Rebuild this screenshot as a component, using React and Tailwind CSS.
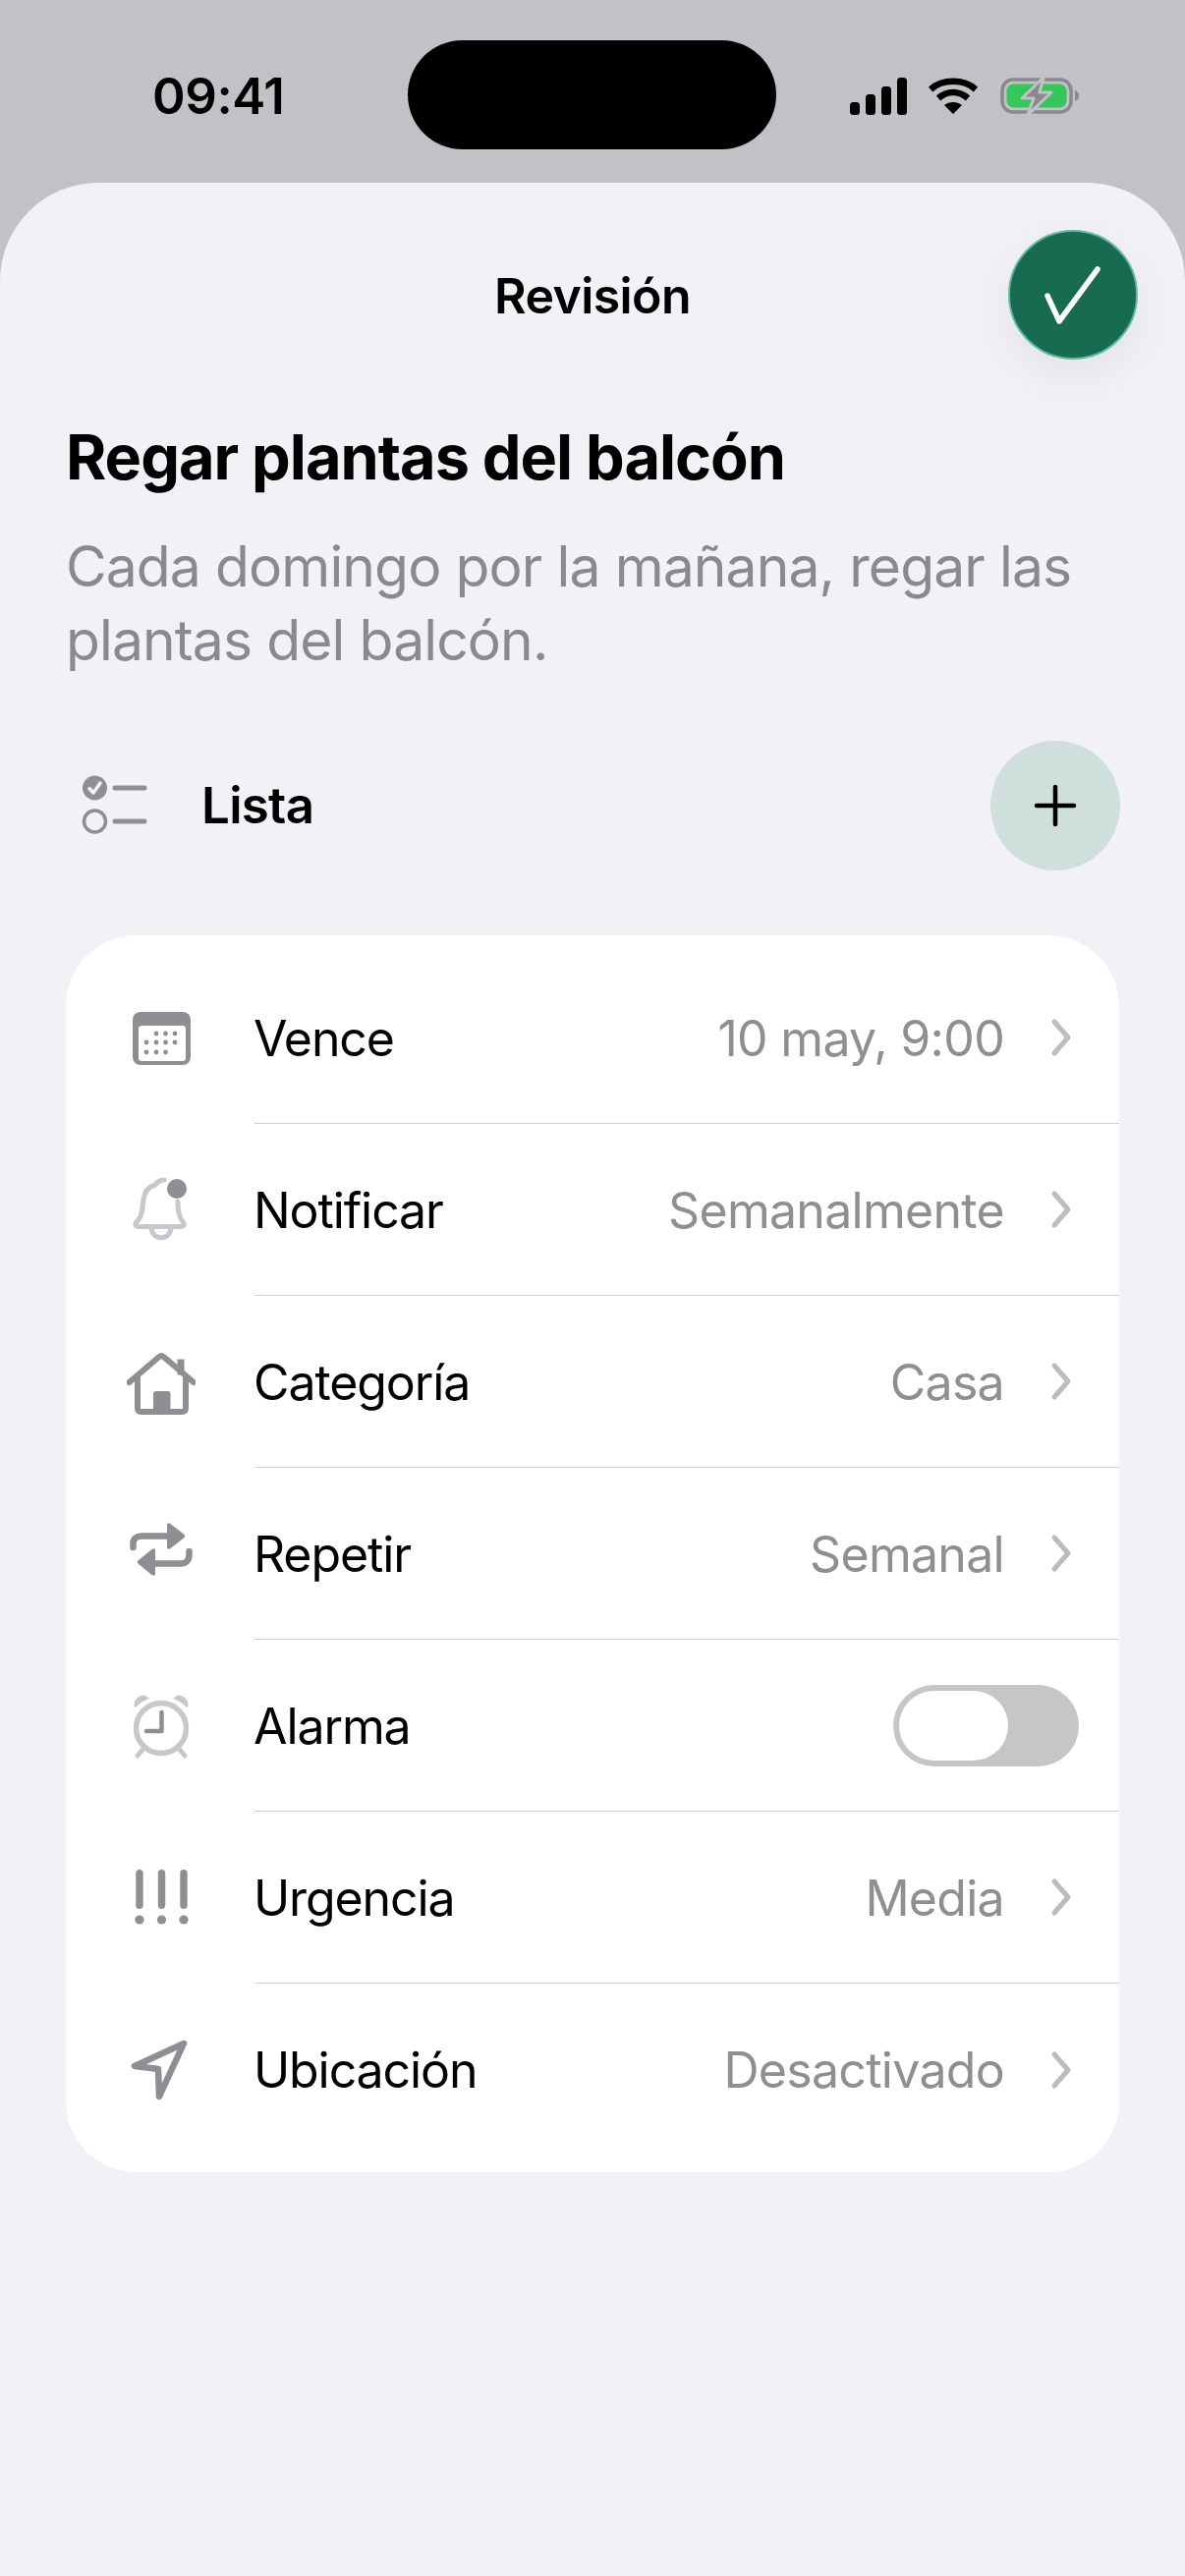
const font = { fontFamily: "Inter, 'Noto Sans', sans-serif" };

const CalendarIcon = () => (
  <svg viewBox="0 0 70 70" className="w-[70px] h-[70px]" fill="#8e8e93">
    <rect x="6" y="8" width="59" height="54" rx="8" />
    <rect x="12" y="22" width="48" height="36" rx="3" fill="#fff" />
    {[[30, 30], [39.5, 30], [49, 30], [20, 39], [30, 39], [39.5, 39], [49, 39], [20, 49], [30, 49], [39.5, 49]].map(([cx, cy]) => (
      <circle key={cx + "-" + cy} cx={cx} cy={cy} r="2.4" />
    ))}
  </svg>
);

const BellIcon = () => (
  <svg viewBox="0 0 70 70" className="w-[70px] h-[70px]" fill="none">
    <path d="M38 4 C34 4 30 7 29 9 C22 11 18 16 17 24 C16 33 16 38 13 43 C11 46 9 47 9 49 C9 51 10 51.500 12 51.500 L55 51.500 C58 51.500 59 50 58 48 C54 43 52 38 52 26" stroke="#c7c7cc" strokeWidth="5" strokeLinecap="round" />
    <path d="M25 53 C26 66 44 66 45 53" stroke="#c7c7cc" strokeWidth="5" />
    <circle cx="51" cy="13" r="10" fill="#8e8e93" />
  </svg>
);

const HouseIcon = () => (
  <svg viewBox="0 0 70 70" className="w-[70px] h-[70px]" fill="none" stroke="#8e8e93" strokeWidth="6" strokeLinecap="round" strokeLinejoin="round">
    <path d="M2.500 35 L33 9 C34.500 7.800 36 7.800 37.500 9 L68 35" />
    <path d="M11 30 V61 C11 64 12 65 15 65 H56 C59 65 60 64 60 61 V30" />
    <path d="M55 15 V24" strokeWidth="7" strokeLinecap="square" />
    <path d="M27 65 V47 C27 45 28 44 30 44 H42 C44 44 44.500 45 44.500 47 V65 Z" fill="#8e8e93" stroke="none" />
  </svg>
);

const RepeatIcon = () => (
  <svg viewBox="0 0 70 70" className="w-[70px] h-[70px]" fill="none">
    <path d="M6.500 28 V24 C6.500 19 10 16.500 15 16.500 H44" stroke="#8e8e93" strokeWidth="6.500" strokeLinecap="round" />
    <path d="M41 5 C41 3 43 3 44.500 4 L58 14.500 C59.500 16 59.500 17 58 18.500 L44.500 29 C43 30 41 30 41 28 Z" fill="#8e8e93" />
    <path d="M63.500 32 V36 C63.500 41 60 44.500 55 44.500 H26" stroke="#8e8e93" strokeWidth="6.500" strokeLinecap="round" />
    <path d="M29 31 C29 29 27 29 25.500 30 L12 41 C10.500 42.500 10.500 43.500 12 45 L25.500 56 C27 57 29 57 29 55 Z" fill="#8e8e93" />
  </svg>
);

const AlarmIcon = () => (
  <svg viewBox="0 0 70 70" className="w-[70px] h-[70px]" fill="none">
    <circle cx="35" cy="37" r="25.500" stroke="#c7c7cc" strokeWidth="5.500" />
    <path d="M16 59 L11 65 M54 59 L59 65" stroke="#c7c7cc" strokeWidth="5" strokeLinecap="round" />
    <path d="M7.500 14 C7 8 14 2 19 4 C21 5 22 6 23 7 C17 9 12 12 9.500 16 C8.500 16 7.500 15 7.500 14 Z" fill="#c7c7cc" />
    <path d="M62.500 14 C63 8 56 2 51 4 C49 5 48 6 47 7 C53 9 58 12 60.500 16 C61.500 16 62.500 15 62.500 14 Z" fill="#c7c7cc" />
    <path d="M35.500 21 V40 H20" stroke="#8e8e93" strokeWidth="4.500" strokeLinecap="round" strokeLinejoin="round" />
  </svg>
);

const UrgencyIcon = () => (
  <svg viewBox="0 0 70 70" className="w-[70px] h-[70px]" fill="#8e8e93">
    {[13, 35.500, 58].map((cx) => (
      <g key={cx}>
        <rect x={cx - 3.700} y="6" width="7.400" height="40" rx="3.700" />
        <circle cx={cx} cy="57" r="4.600" />
      </g>
    ))}
  </svg>
);

const LocationIcon = () => (
  <svg viewBox="0 0 70 70" className="w-[70px] h-[70px]" fill="none" stroke="#8e8e93" strokeWidth="6.500" strokeLinejoin="round">
    <path d="M58 8 L8 31 L32 34 L33 62 Z" />
  </svg>
);

const ChecklistIcon = () => (
  <svg viewBox="0 0 70 70" className="w-[70px] h-[70px]" fill="none">
    <circle cx="14.500" cy="17" r="12.500" fill="#8e8e93" />
    <path d="M9 17.500 L13 22 L20 12" stroke="#f1f1f6" strokeWidth="3.500" strokeLinecap="round" strokeLinejoin="round" />
    <circle cx="14.500" cy="51" r="11" stroke="#8e8e93" strokeWidth="3.500" />
    <path d="M35 17 H65 M35 51 H65" stroke="#8e8e93" strokeWidth="5" strokeLinecap="round" />
  </svg>
);

const Chevron = () => (
  <svg viewBox="0 0 24 40" className="w-[24px] h-[40px]" fill="none" stroke="#bcbcc0" strokeWidth="5" strokeLinecap="round" strokeLinejoin="round">
    <path d="M5 4 L19 20 L5 36" />
  </svg>
);

const StatusIcons = () => (
  <div className="flex items-center">
    <svg viewBox="0 0 58 38" className="w-[58px] h-[38px] mr-[22px]" fill="#000">
      <rect x="0" y="25" width="10" height="13" rx="3.500" />
      <rect x="16" y="17" width="10" height="21" rx="3.500" />
      <rect x="32" y="9" width="10" height="29" rx="3.500" />
      <rect x="48" y="0" width="10" height="38" rx="3.500" />
    </svg>
    <svg viewBox="0 0 50 38" className="w-[50px] h-[38px] mr-[23px]" fill="none" stroke="#000" strokeWidth="6.500">
      <path d="M2 12 C14 1 36 1 48 12" />
      <path d="M10 21 C19 13 31 13 40 21" />
      <path d="M25 37 L16 28 C21 24 29 24 34 28 Z" fill="#000" stroke="none" />
    </svg>
    <svg viewBox="0 0 84 42" className="w-[84px] h-[42px]" fill="none">
      <rect x="2" y="4" width="70" height="33" rx="11" stroke="#8a8a8e" strokeWidth="3.500" />
      <rect x="6.500" y="8.500" width="61" height="24" rx="7" fill="#34c759" />
      <path d="M76 15 C79 16 80 18 80 20.500 C80 23 79 25 76 26 Z" fill="#8a8a8e" />
      <path d="M44 2 L22 23 H34 L28 40 L52 17 H40 Z" fill="#8a8a8e" stroke="#c2c1c6" strokeWidth="3" strokeLinejoin="round" />
    </svg>
  </div>
);

const rows = [
  { label: "Vence", value: "10 may, 9:00", icon: <CalendarIcon /> },
  { label: "Notificar", value: "Semanalmente", icon: <BellIcon /> },
  { label: "Categoría", value: "Casa", icon: <HouseIcon /> },
  { label: "Repetir", value: "Semanal", icon: <RepeatIcon /> },
  { label: "Alarma", toggle: true, icon: <AlarmIcon /> },
  { label: "Urgencia", value: "Media", icon: <UrgencyIcon /> },
  { label: "Ubicación", value: "Desactivado", icon: <LocationIcon /> },
];

export default function App() {
  return (
    <div className="w-[1206px] h-[2622px] bg-[#c2c1c6] flex flex-col overflow-hidden" style={font}>
      {/* Status bar */}
      <div className="h-[186px] shrink-0 flex items-start">
        <div className="w-[415px] pt-[69px] pl-[155px] text-[51px] leading-[58px] font-semibold text-black tracking-[-0.4px]">09:41</div>
        <div className="w-[375px] h-[111px] mt-[41px] rounded-[56px] bg-black" />
        <div className="pt-[77px] pl-[75px]">
          <StatusIcons />
        </div>
      </div>

      {/* Sheet */}
      <div className="flex-1 bg-[#f1f1f6] rounded-t-[100px] px-[67px] relative">
        <button className="absolute right-[48px] top-[48px] w-[132px] h-[132px] rounded-full bg-[#176b50] border-2 border-[#62b99c] flex items-center justify-center shadow-[0_16px_50px_rgba(0,0,0,0.07)]">
          <svg viewBox="0 0 60 64" className="w-[60px] h-[64px]" fill="none" stroke="#fff" strokeWidth="5.500" strokeLinecap="round" strokeLinejoin="round">
            <path d="M4 33 L16 59 L55 6" />
          </svg>
        </button>

        <div className="pt-[85px] text-center text-[50px] leading-[60px] font-semibold text-black tracking-[-0.6px]">Revisión</div>

        <h1 className="mt-[98px] text-[63px] leading-[72px] font-bold text-black tracking-[-1px]">Regar plantas del balcón</h1>
        <p className="mt-[38px] text-[57px] leading-[75px] text-[#8a8a8e] tracking-[-0.9px]">
          Cada domingo por la mañana, regar las plantas del balcón.
        </p>

        <div className="mt-[65px] flex items-center justify-between">
          <div className="flex items-center gap-[53px] pl-[15px]">
            <ChecklistIcon />
            <span className="text-[51px] font-semibold text-black tracking-[-0.7px]">Lista</span>
          </div>
          <div className="w-[132px] h-[132px] -mr-[1px] rounded-full bg-[#cfdfdc] flex items-center justify-center">
            <svg viewBox="0 0 44 44" className="w-[44px] h-[44px]" fill="none" stroke="#000" strokeWidth="4.500" strokeLinecap="round">
              <path d="M22 3 V41 M3 22 H41" />
            </svg>
          </div>
        </div>

        {/* Settings card */}
        <div className="mt-[66px] bg-white rounded-[72px] pt-[17px] pb-[17px]">
          {rows.map((row, i) => (
            <div key={row.label} className="h-[175px] flex items-center pl-[62px]">
              <div className="w-[70px] shrink-0 mr-[60px]">{row.icon}</div>
              <div className={"flex-1 self-stretch flex items-center " + (i < rows.length - 1 ? "border-b border-[#cfcfd2]" : "")}>
                <span className="pt-[2px] -ml-[1px] text-[50px] text-black tracking-[-1.1px]">{row.label}</span>
                {row.toggle ? (
                  <div className="ml-auto w-[189px] h-[83px] rounded-full bg-[#c6c6c8] p-[6px] mr-[41px]">
                    <div className="w-[111px] h-[71px] rounded-full bg-white" />
                  </div>
                ) : (
                  <div className="ml-auto flex items-center gap-[46px] pr-[47px]">
                    <span className="pt-[2px] text-[50px] text-[#8e8e93] tracking-[-0.7px]">{row.value}</span>
                    <Chevron />
                  </div>
                )}
              </div>
            </div>
          ))}
        </div>
      </div>
    </div>
  );
}
